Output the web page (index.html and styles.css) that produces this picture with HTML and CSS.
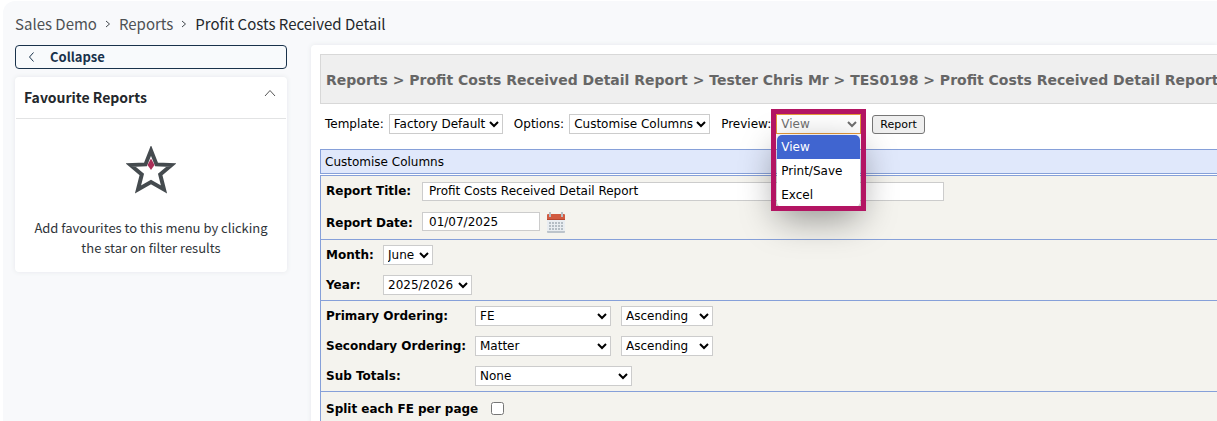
FILE: index.html
```html
<!DOCTYPE html>
<html lang="en">
<head>
<meta charset="utf-8">
<title>Profit Costs Received Detail</title>
<link rel="stylesheet" href="styles.css">
</head>
<body>
<div class="app">
  <nav class="crumbs" aria-label="Breadcrumb">
    <a href="#">Sales Demo</a>
    <svg class="crumb-sep" viewBox="0 0 6 8"><path d="M1 1l3.500 3L1 7"/></svg>
    <a href="#">Reports</a>
    <svg class="crumb-sep" viewBox="0 0 6 8"><path d="M1 1l3.500 3L1 7"/></svg>
    <span class="crumb-current">Profit Costs Received Detail</span>
  </nav>
  <div class="columns">
    <aside class="sidebar">
      <button class="collapse" type="button">
        <svg class="collapse-icon" viewBox="0 0 6 10"><path d="M5 .5L1 5l4 4.500"/></svg>
        Collapse
      </button>
      <section class="card">
        <header class="card-head">
          <h2 class="card-title">Favourite Reports</h2>
          <svg class="card-caret" viewBox="0 0 12 8"><path d="M1 7l5-5.500L11 7"/></svg>
        </header>
        <div class="card-body">
          <svg class="star" viewBox="0 0 50 48">
            <path class="star-line" d="M25 4.500L30.500 18.400L45.500 19L34.200 28.500L38 43.500L25 36L12 43.500L15.800 28.500L4.500 19L19.500 18.400Z"/>
            <path class="star-gem" d="M25 12.500L28.500 19L25 24L21.500 19Z"/>
          </svg>
          <p class="card-text">Add favourites to this menu by clicking the star on filter results</p>
        </div>
      </section>
    </aside>
    <main class="panel">
      <h1 class="report-path">Reports &gt; Profit Costs Received Detail Report &gt; Tester Chris Mr &gt; TES0198 &gt; Profit Costs Received Detail Report</h1>
      <div class="toolbar">
        <div class="tool">
          <label for="template">Template:</label>
          <select id="template" class="w-template"><option>Factory Default</option></select>
        </div>
        <div class="tool">
          <label for="options">Options:</label>
          <select id="options" class="w-options"><option>Customise Columns</option></select>
        </div>
        <div class="tool">
          <label for="preview">Preview:</label>
          <div class="preview">
            <select id="preview" class="w-preview"><option>View</option><option>Print/Save</option><option>Excel</option></select>
            <ul class="menu">
              <li class="menu-item menu-item-active">View</li>
              <li class="menu-item">Print/Save</li>
              <li class="menu-item">Excel</li>
            </ul>
            <div class="highlight"></div>
          </div>
        </div>
        <button class="report-button" type="button">Report</button>
      </div>
      <div class="section-bar">Customise Columns</div>
      <form class="form">
        <div class="group group-report">
          <div class="row"><label for="title">Report Title:</label><input id="title" class="text text-wide" type="text" value="Profit Costs Received Detail Report"></div>
          <div class="row row-date"><label for="date">Report Date:</label>
            <div class="date-field">
              <input id="date" class="text text-date" type="text" value="01/07/2025">
              <svg class="calendar" viewBox="0 0 18 21">
                <rect x="0" y="3" width="18" height="18" rx="1" fill="#e9edf1"/>
                <path d="M0 19h18v1q0 1-1 1H1q-1 0-1-1z" fill="#bcc4cb"/>
                <path d="M0 8V3q0-1 1-1h16q1 0 1 1v5z" fill="#d15a40"/>
                <path d="M0 7h18v1H0z" fill="#b5452f"/>
                <path d="M2 0h2v5H2zM14 0h2v5h-2z" fill="#b6bec5"/>
                <path d="M2 11h14M2 14h14M2 17h14" stroke="#b5bdc4" stroke-width="2" stroke-dasharray="2 1"/>
              </svg>
            </div>
          </div>
        </div>
        <div class="group group-period">
          <div class="row"><label for="month">Month:</label><select id="month" class="w-month"><option>June</option></select></div>
          <div class="row"><label for="year">Year:</label><select id="year" class="w-year"><option>2025/2026</option></select></div>
        </div>
        <div class="group group-order">
          <div class="row"><label for="primary">Primary Ordering:</label><select id="primary" class="w-order"><option>FE</option></select><select class="w-direction" aria-label="Primary direction"><option>Ascending</option></select></div>
          <div class="row"><label for="secondary">Secondary Ordering:</label><select id="secondary" class="w-order"><option>Matter</option></select><select class="w-direction" aria-label="Secondary direction"><option>Ascending</option></select></div>
          <div class="row"><label for="totals">Sub Totals:</label><select id="totals" class="w-totals"><option>None</option></select></div>
        </div>
        <div class="group group-split">
          <div class="row"><label for="split">Split each FE per page</label><input id="split" class="check" type="checkbox"></div>
        </div>
      </form>
    </main>
  </div>
</div>
</body>
</html>
```
FILE: styles.css
```css
* { box-sizing: border-box; }
html { overflow: hidden; }
body {
  margin: 0;
  height: 100vh;
  overflow: hidden;
  background: #fff;
  color: #000;
  font: 12px/20px "DejaVu Sans", Verdana, sans-serif;
}
svg { flex: none; fill: none; }
.app {
  margin: 1px 0 0 3px;
  padding: 11px 0 0 12px;
  min-height: 100vh;
  background: #f8f9fb;
  border-radius: 12px 0 0 0;
}
.crumbs {
  display: flex;
  align-items: center;
  height: 24px;
  font: 15px/24px "Noto Sans CJK SC", "Open Sans", sans-serif;
}
.crumbs a { color: #4e5154; text-decoration: none; }
.crumb-current { color: #24282c; }
.crumb-sep { width: 6px; height: 8px; margin: 0 8px; stroke: #40464b; stroke-width: 1; }
.columns { display: flex; gap: 24px; margin-top: 9px; }
.sidebar {
  flex: none;
  width: 272px;
  font-family: "Noto Sans CJK SC", "Open Sans", sans-serif;
}
.collapse {
  display: flex;
  align-items: center;
  gap: 15px;
  width: 100%;
  height: 24px;
  padding: 0 12px;
  border: 1px solid #19324b;
  border-radius: 4px;
  background: #f8fafc;
  color: #19324b;
  font: bold 13px/20px "Noto Sans CJK SC", "Open Sans", sans-serif;
}
.collapse-icon { width: 7px; height: 10px; stroke: #19324b; stroke-width: 1; }
.card {
  margin-top: 8px;
  background: #fff;
  border-radius: 4px;
  box-shadow: 0 0 5px #e6e8eb;
}
.card-head {
  display: flex;
  justify-content: space-between;
  height: 42px;
  margin: 0 1px;
  padding: 10px 10px 0 8px;
  border-bottom: 1px solid #e2e3e4;
}
.card-title { margin: 0; color: #24282c; font-size: 14px; line-height: 20px; }
.card-caret { width: 12px; height: 8px; margin-top: 2px; stroke: #555; stroke-width: 1; }
.card-body { padding: 27px 12px 14px; text-align: center; }
.star { display: block; width: 50px; height: 48px; margin: 0 auto; }
.star-line { stroke: #454b4f; stroke-width: 4; stroke-miterlimit: 8; }
.star-gem { fill: #ab2e58; }
.card-text { margin: 24px 0 0; color: #30353a; font-size: 13px; line-height: 20px; }
.panel {
  flex: 1;
  min-width: 0;
  padding: 9px 0 0 9px;
  background: #fff;
  border-radius: 4px 0 0 0;
  box-shadow: 0 0 5px #e6e8eb;
}
.report-path {
  margin: 0;
  padding: 14px 0 12px 5px;
  border: 1px solid #d8d8d8;
  border-right: 0;
  background: #efefef;
  color: #666;
  font-size: 14px;
  line-height: 22px;
  white-space: nowrap;
  overflow: hidden;
}
.toolbar { display: flex; align-items: center; gap: 11px; height: 40px; margin-bottom: 5px; padding-left: 5px; }
.tool { display: flex; align-items: center; gap: 5px; white-space: nowrap; }
select {
  height: 20px;
  margin: 0;
  padding: 0;
  border: 1px solid #ccc;
  border-radius: 0;
  background: #fff;
  color: #000;
  font: 12px "DejaVu Sans", Verdana, sans-serif;
}
.w-template { width: 114px; }
.w-options { width: 141px; }
.w-preview { width: 85px; border-color: #e59a3c; color: #707070; }
.preview { position: relative; }
.preview select { display: block; }
.menu {
  position: absolute;
  z-index: 1;
  top: 21px;
  left: 1px;
  width: 83px;
  margin: 0;
  padding: 0;
  overflow: hidden;
  list-style: none;
  background: #fff;
  border-radius: 5px;
  box-shadow: 0 12px 36px rgba(0, 0, 0, .4);
}
.menu-item { padding: 0 4px; line-height: 24px; }
.menu-item-active { background: #4065d0; color: #fff; }
.highlight { position: absolute; z-index: 2; top: -5px; left: -5px; width: 95px; height: 102px; border: 5px solid #b31563; }
.report-button {
  height: 19px;
  padding: 0 7px;
  border: 1px solid #767676;
  border-radius: 3px;
  background: #efefef;
  color: #000;
  font: 11px/17px "DejaVu Sans", Verdana, sans-serif;
}
.section-bar { margin-bottom: 1px; padding: 2px 4px 1px; border: 1px solid #86a0d9; border-right: 0; background: #e0e8fb; }
.form { border: 1px solid #86a0d9; border-width: 1px 0 0 1px; background: #f4f3ee; }
.group { padding-left: 5px; border-bottom: 1px solid #86a0d9; }
.row { display: flex; align-items: center; height: 30px; }
.row label { flex: none; font-weight: bold; white-space: nowrap; }
.text {
  height: 19px;
  padding: 0 6px;
  border: 1px solid #ccc;
  background: #fff;
  color: #000;
  font: 12px "DejaVu Sans", Verdana, sans-serif;
}
.text-wide { width: 522px; }
.text-date { width: 118px; }
.row-date { height: 33px; }
.date-field { display: flex; gap: 7px; }
.calendar { width: 18px; height: 21px; }
.group-report label { width: 96px; }
.group-period label { width: 57px; }
.group-order label { width: 149px; }
.group-split label { width: 165px; }
.group-split .row { height: 33px; }
.w-month { width: 50px; }
.w-year { width: 89px; }
.w-order { width: 136px; }
.w-direction { width: 92px; margin-left: 10px; }
.w-totals { width: 157px; }
.check { width: 13px; height: 13px; margin: 0; }
```
